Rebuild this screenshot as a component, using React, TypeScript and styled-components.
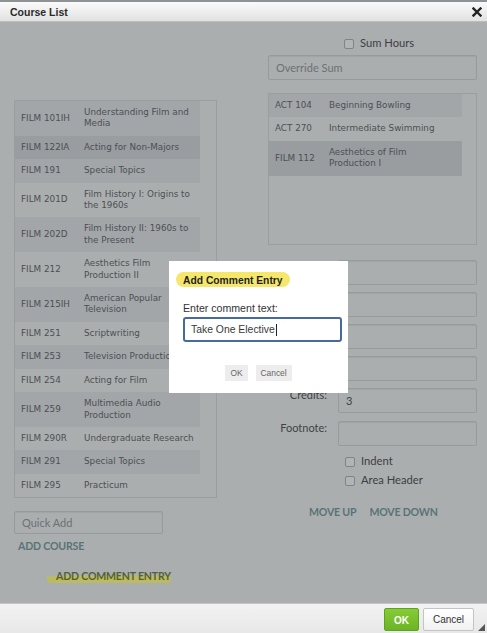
import styled, { createGlobalStyle } from 'styled-components';

type Tone = 'mid' | 'light' | 'dark';

type Course = {
    code: string;
    title: string;
    tone: Tone;
};

const leftCourses: Course[] = [
    { code: 'FILM 101IH', title: 'Understanding Film and Media', tone: 'mid' },
    { code: 'FILM 122IA', title: 'Acting for Non-Majors', tone: 'dark' },
    { code: 'FILM 191', title: 'Special Topics', tone: 'mid' },
    { code: 'FILM 201D', title: 'Film History I: Origins to the 1960s', tone: 'light' },
    { code: 'FILM 202D', title: 'Film History II: 1960s to the Present', tone: 'mid' },
    { code: 'FILM 212', title: 'Aesthetics Film Production II', tone: 'light' },
    { code: 'FILM 215IH', title: 'American Popular Television', tone: 'mid' },
    { code: 'FILM 251', title: 'Scriptwriting', tone: 'light' },
    { code: 'FILM 253', title: 'Television Production', tone: 'mid' },
    { code: 'FILM 254', title: 'Acting for Film', tone: 'light' },
    { code: 'FILM 259', title: 'Multimedia Audio Production', tone: 'mid' },
    { code: 'FILM 290R', title: 'Undergraduate Research', tone: 'light' },
    { code: 'FILM 291', title: 'Special Topics', tone: 'mid' },
    { code: 'FILM 295', title: 'Practicum', tone: 'light' },
];

const rightCourses: Course[] = [
    { code: 'ACT 104', title: 'Beginning Bowling', tone: 'mid' },
    { code: 'ACT 270', title: 'Intermediate Swimming', tone: 'light' },
    { code: 'FILM 112', title: 'Aesthetics of Film Production I', tone: 'dark' },
];

const formFields = [
    { label: 'Code:', value: '' },
    { label: 'Title:', value: '' },
    { label: 'Hours:', value: '' },
    { label: 'Type:', value: '' },
    { label: 'Credits:', value: '3' },
    { label: 'Footnote:', value: '' },
];

const App = () => {
    return (
        <>
            <GlobalStyle />
            <Frame>
                <TopStrip />
                <TitleBar>
                    <Title>Course List</Title>
                    <CloseIcon width="10" height="10" viewBox="0 0 10 10">
                        <path d="M1.5 1.5 L8.5 8.5 M8.5 1.5 L1.5 8.5" stroke="#222" strokeWidth="2.4" strokeLinecap="square" />
                    </CloseIcon>
                </TitleBar>
                <Body>
                    <Columns>
                        <LeftCol>
                            <ListBox $height={398} $top={64} $rowWidth={185}>
                                {leftCourses.map((c) => (
                                    <Row key={c.code + c.title} $tone={c.tone} $codeWidth={63} $padRight={2}>
                                        <Code>{c.code}</Code>
                                        <CourseTitle>{c.title}</CourseTitle>
                                    </Row>
                                ))}
                            </ListBox>
                            <QuickAdd placeholder="Quick Add" readOnly />
                            <AddCourse>ADD COURSE</AddCourse>
                            <CommentLink>ADD COMMENT ENTRY</CommentLink>
                        </LeftCol>
                        <RightCol>
                            <CheckRow $pad={76}>
                                <Box />
                                <CheckLabel>Sum Hours</CheckLabel>
                            </CheckRow>
                            <OverrideInput placeholder="Override Sum" readOnly />
                            <ListBox $height={152} $top={13} $rowWidth={193}>
                                {rightCourses.map((c) => (
                                    <Row key={c.code} $tone={c.tone} $codeWidth={54} $padRight={14}>
                                        <Code>{c.code}</Code>
                                        <CourseTitle>{c.title}</CourseTitle>
                                    </Row>
                                ))}
                            </ListBox>
                            <FormGrid>
                                {formFields.map((f) => (
                                    <FieldRow key={f.label}>
                                        <FieldLabel>{f.label}</FieldLabel>
                                        <FieldInput value={f.value} readOnly />
                                    </FieldRow>
                                ))}
                            </FormGrid>
                            <CheckList>
                                <CheckRow $pad={77}>
                                    <Box />
                                    <CheckLabel>Indent</CheckLabel>
                                </CheckRow>
                                <CheckRow $pad={77}>
                                    <Box />
                                    <CheckLabel>Area Header</CheckLabel>
                                </CheckRow>
                            </CheckList>
                            <MoveRow>
                                <ActionLink>MOVE UP</ActionLink>
                                <ActionLink>MOVE DOWN</ActionLink>
                            </MoveRow>
                        </RightCol>
                    </Columns>
                    <Dialog>
                        <DialogTitle>Add Comment Entry</DialogTitle>
                        <DialogLabel>Enter comment text:</DialogLabel>
                        <CommentField>
                            Take One Elective<Caret />
                        </CommentField>
                        <DialogButtons>
                            <SmallButton>OK</SmallButton>
                            <SmallButton>Cancel</SmallButton>
                        </DialogButtons>
                    </Dialog>
                </Body>
                <Footer>
                    <OkButton>OK</OkButton>
                    <CancelButton>Cancel</CancelButton>
                    <Grip width="7" height="7" viewBox="0 0 7 7">
                        <path d="M7 0 L7 7 L0 7 Z" fill="#555" />
                    </Grip>
                </Footer>
            </Frame>
        </>
    );
};

export default App;

const GlobalStyle = createGlobalStyle`
    html, body {
        margin: 0;
        padding: 0;
        background: #abaeaf;
    }
    * {
        box-sizing: border-box;
    }
`;

const Frame = styled.div`
    width: 487px;
    height: 633px;
    display: flex;
    flex-direction: column;
    overflow: hidden;
    font-family: Lato, 'Liberation Sans', sans-serif;
`;

const TopStrip = styled.div`
    height: 2px;
    background: #8e9294;
`;

const TitleBar = styled.div`
    height: 20px;
    display: flex;
    align-items: center;
    justify-content: space-between;
    padding: 0 5px 0 10px;
    background: linear-gradient(#fafafa, #e2e2e2);
    border-bottom: 1px solid #bdbdbd;
`;

const Title = styled.span`
    font-family: 'Liberation Sans', Arial, sans-serif;
    font-weight: bold;
    font-size: 10.5px;
    color: #2a2a2a;
`;

const CloseIcon = styled.svg`
    display: block;
`;

const Body = styled.div`
    flex: 1;
    position: relative;
    background: #abaeaf;
    padding: 14px 10px 0 14px;
`;

const Columns = styled.div`
    display: grid;
    grid-template-columns: 203px 209px;
    column-gap: 51px;
`;

const LeftCol = styled.div`
    display: flex;
    flex-direction: column;
`;

const RightCol = styled.div`
    display: flex;
    flex-direction: column;
`;

const ListBox = styled.div<{ $height: number; $top: number; $rowWidth: number }>`
    height: ${(p) => p.$height}px;
    margin-top: ${(p) => p.$top}px;
    border: 1px solid #9a9ea0;
    background: #abaeaf;
    display: flex;
    flex-direction: column;
    overflow: hidden;
    & > * {
        width: ${(p) => p.$rowWidth}px;
    }
`;

const toneColors: Record<Tone, string> = {
    mid: '#a3a6a8',
    light: '#abaeaf',
    dark: '#999da0',
};

const Row = styled.div<{ $tone: Tone; $codeWidth: number; $padRight: number }>`
    display: grid;
    grid-template-columns: ${(p) => p.$codeWidth}px 1fr;
    align-items: center;
    padding: 6px ${(p) => p.$padRight}px 6px 6px;
    background: ${(p) => toneColors[p.$tone]};
    font-family: 'DejaVu Sans', Verdana, sans-serif;
    font-size: 8.8px;
    line-height: 11.4px;
    color: #4b5053;
`;

const Code = styled.span``;

const CourseTitle = styled.span``;

const inputLook = `
    height: 25px;
    border: 1px solid #979b9d;
    border-radius: 2px;
    background: #abaeaf;
    font-family: Lato, 'Liberation Sans', sans-serif;
    font-size: 11px;
    color: #3e4346;
    padding: 0 7px;
    outline: none;
    box-shadow: inset 0 1px 1px rgba(0, 0, 0, 0.06);
    &::placeholder {
        color: #6c7174;
    }
`;

const QuickAdd = styled.input`
    ${inputLook}
    width: 149px;
    height: 23px;
    margin-top: 13px;
`;

const OverrideInput = styled.input`
    ${inputLook}
    width: 209px;
    margin-top: 7px;
`;

const ActionLink = styled.span`
    font-family: Lato, 'Liberation Sans', sans-serif;
    font-size: 10.6px;
    font-weight: bold;
    color: #5a7377;
    letter-spacing: -0.2px;
    line-height: 12px;
`;

const AddCourse = styled(ActionLink)`
    margin: 6px 0 0 4px;
`;

const CommentLink = styled(ActionLink)`
    align-self: flex-start;
    margin: 16px 0 0 33px;
    padding: 2px 0 3px 9px;
    color: #57612f;
    background: linear-gradient(transparent 45%, #babb62 45%, #babb62 90%, transparent 90%);
    border-radius: 0 0 6px 6px;
`;

const CheckRow = styled.div<{ $pad: number }>`
    display: flex;
    align-items: center;
    gap: 6px;
    padding-left: ${(p) => p.$pad}px;
    height: 12px;
`;

const Box = styled.span`
    width: 10px;
    height: 10px;
    margin-top: 3px;
    border: 1px solid #7f8486;
    border-radius: 2px;
    background: #b2b5b6;
`;

const CheckLabel = styled.span`
    font-size: 11.2px;
    color: #3b4043;
`;

const FormGrid = styled.div`
    margin-top: 15px;
    display: flex;
    flex-direction: column;
    gap: 7px;
`;

const FieldRow = styled.div`
    display: grid;
    grid-template-columns: 62px 139px;
    column-gap: 8px;
    &:last-child {
        margin-top: 1px;
    }
`;

const FieldLabel = styled.span`
    text-align: right;
    padding: 0 3px 0 0;
    font-size: 11px;
    color: #3e4346;
`;

const FieldInput = styled.input`
    ${inputLook}
    width: 139px;
`;

const CheckList = styled.div`
    margin-top: 8px;
    display: flex;
    flex-direction: column;
    gap: 7px;
`;

const MoveRow = styled.div`
    margin-top: 21px;
    padding-left: 41px;
    display: flex;
    gap: 13px;
`;

const Dialog = styled.div`
    position: absolute;
    left: 169px;
    top: 239px;
    width: 179px;
    height: 132px;
    background: #fff;
    padding: 11px 6px 0 14px;
    display: flex;
    flex-direction: column;
`;

const DialogTitle = styled.span`
    align-self: flex-start;
    margin-left: -7px;
    padding: 1px 7px 0 7px;
    height: 15px;
    line-height: 15px;
    border-radius: 8px;
    background: #f5e76c;
    font-family: 'Liberation Sans', Arial, sans-serif;
    font-weight: bold;
    font-size: 10.3px;
    color: #1f1f1f;
`;

const DialogLabel = styled.span`
    margin-top: 15px;
    font-family: 'Liberation Sans', Arial, sans-serif;
    font-size: 10.6px;
    color: #333;
`;

const CommentField = styled.div`
    margin-top: 3px;
    width: 159px;
    height: 25px;
    border: 2px solid #476a9c;
    border-radius: 3px;
    display: flex;
    align-items: center;
    padding-left: 6px;
    font-family: 'Liberation Sans', Arial, sans-serif;
    font-size: 10.4px;
    color: #3a3a3a;
`;

const Caret = styled.span`
    width: 1px;
    height: 12px;
    background: #222;
    margin-left: 1px;
`;

const DialogButtons = styled.div`
    margin: 23px 0 0 -8px;
    display: flex;
    justify-content: center;
    gap: 8px;
`;

const SmallButton = styled.span`
    height: 16px;
    line-height: 16px;
    padding: 0 5px;
    background: #ededed;
    font-family: 'Liberation Sans', Arial, sans-serif;
    font-size: 8.4px;
    color: #666;
`;

const Footer = styled.div`
    height: 30px;
    border-top: 1px solid #c6c6c6;
    background: linear-gradient(#f2f2f2, #e8e8e8);
    display: flex;
    align-items: center;
    justify-content: flex-end;
    gap: 4px;
    padding: 2px 2px 0 0;
`;

const OkButton = styled.span`
    width: 35px;
    height: 23px;
    line-height: 23px;
    text-align: center;
    border-radius: 2px;
    background: linear-gradient(#86cc37, #6bb425);
    border: 1px solid #5fa21f;
    font-family: 'Liberation Sans', Arial, sans-serif;
    font-size: 10px;
    font-weight: bold;
    color: #fff;
`;

const CancelButton = styled.span`
    width: 51px;
    height: 23px;
    line-height: 21px;
    text-align: center;
    border-radius: 2px;
    background: linear-gradient(#ffffff, #f1f1f1);
    border: 1px solid #c4c4c4;
    font-family: 'Liberation Sans', Arial, sans-serif;
    font-size: 10px;
    color: #333;
`;

const Grip = styled.svg`
    align-self: flex-end;
    margin-bottom: 2px;
`;
